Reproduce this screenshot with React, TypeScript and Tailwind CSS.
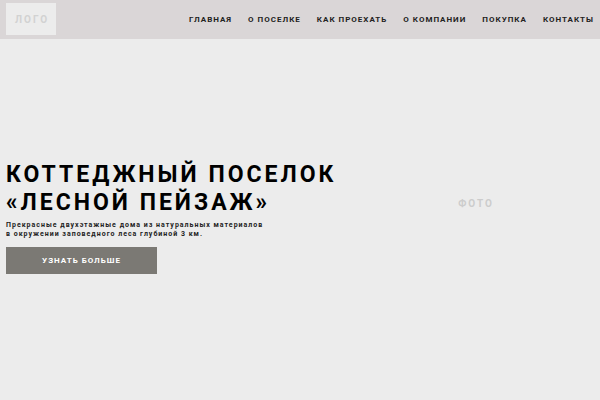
const links = [
  { href: "#main", label: "Главная" },
  { href: "#about", label: "О поселке" },
  { href: "#route", label: "Как проехать" },
  { href: "#company", label: "О компании" },
  { href: "#buy", label: "Покупка" },
  { href: "#contacts", label: "Контакты" },
];

function Header() {
  return (
    <header className="flex items-center justify-between bg-[#dad6d7] px-1.5 pt-[3px] pb-1">
      <a
        href="#main"
        className="flex h-8 w-[50px] items-center justify-center bg-[#ececec] pl-0.5 text-[10px] font-bold tracking-[2px] text-[#d2d2d2] uppercase"
      >
        Лого
      </a>
      <nav className="pt-0.5">
        <ul className="flex gap-4 text-[8px] leading-3 font-bold tracking-[1px] whitespace-nowrap text-[#222222] uppercase">
          {links.map((link) => (
            <li key={link.href}>
              <a href={link.href} className="hover:text-[#7b7974]">{link.label}</a>
            </li>
          ))}
        </ul>
      </nav>
    </header>
  );
}

function Hero() {
  return (
    <main id="main" className="grid flex-1 grid-cols-[7fr_5fr]">
      <section className="flex flex-col items-start justify-center px-1.5 pb-1">
        <h1 className="text-[23px] leading-7 font-bold tracking-[3px] whitespace-nowrap text-black uppercase">
          Коттеджный поселок
          <br />
          «Лесной пейзаж»
        </h1>
        <p className="mt-1 text-[7px] leading-[9px] font-bold tracking-[1px] whitespace-nowrap text-[#222222]">
          Прекрасные двухэтажные дома из натуральных материалов
          <br />
          в окружении заповедного леса глубиной 3 км.
        </p>
        <button
          type="button"
          className="mt-2 h-[27px] w-[151px] bg-[#7b7974] text-[8px] font-bold tracking-[1px] text-white uppercase"
        >
          Узнать больше
        </button>
      </section>
      <section className="flex items-center justify-center pb-8 pl-0.5 text-[10px] font-bold tracking-[2px] text-[#cccccc] uppercase">
        Фото
      </section>
    </main>
  );
}

export default function App() {
  return (
    <div className="flex min-h-screen flex-col bg-[#ececec] font-['Roboto',sans-serif]">
      <Header />
      <Hero />
    </div>
  );
}
